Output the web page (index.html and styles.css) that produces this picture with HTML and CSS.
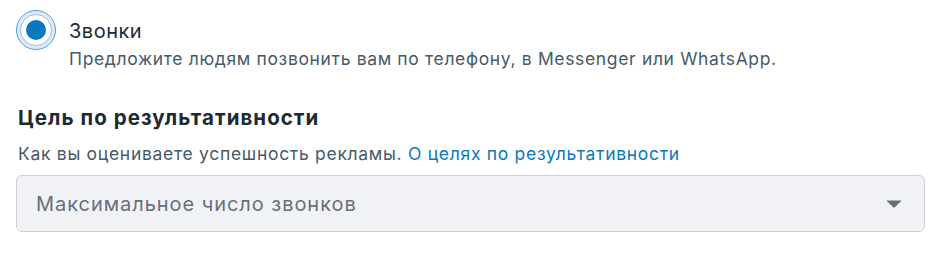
FILE: index.html
```html
<!DOCTYPE html>
<html lang="ru">
<head>
    <meta charset="UTF-8">
    <title>Звонки</title>
    <link rel="stylesheet" href="styles.css">
</head>
<body>
    <div class="option">
        <div class="radio">
            <svg width="40" height="40" viewBox="0 0 40 40">
                <circle cx="20" cy="20" r="19.5" fill="#dde9f6" stroke="#5b9ddc" stroke-width="1"/>
                <circle cx="20" cy="20" r="15.5" fill="#ffffff" stroke="#9dbfe2" stroke-width="1"/>
                <circle cx="20" cy="20" r="10" fill="#0a78be"/>
            </svg>
        </div>
        <div class="option-text">
            <div class="option-title">Звонки</div>
            <div class="option-desc">Предложите людям позвонить вам по телефону, в Messenger или WhatsApp.</div>
        </div>
    </div>

    <div class="goal">
        <h2 class="goal-title">Цель по результативности</h2>
        <p class="goal-desc">Как вы оцениваете успешность рекламы. <a href="#" class="link">О целях по результативности</a></p>
        <div class="select">
            <span class="select-value">Максимальное число звонков</span>
            <svg class="caret" width="16" height="8" viewBox="0 0 16 8">
                <path d="M1.2 0.5 H14.8 Q15.8 0.5 15 1.3 L8.8 7.2 Q8 7.9 7.2 7.2 L1 1.3 Q0.2 0.5 1.2 0.5 Z" fill="#67707a"/>
            </svg>
        </div>
    </div>
</body>
</html>
```

FILE: styles.css
```css
*{
    box-sizing: border-box;
    margin: 0;
    padding: 0;
}
body{
    font-family: Inter, "Noto Sans", sans-serif;
    color: #1c2b33;
    background: #ffffff;
    padding: 10px 21px 0 16px;
}
.option{
    display: flex;
    align-items: flex-start;
}
.radio{
    width: 40px;
    height: 40px;
    margin-right: 13px;
}
.radio svg{
    display: block;
}
.option-text{
    padding-top: 9px;
}
.option-title{
    font-size: 20px;
    line-height: 24px;
    letter-spacing: 0.5px;
}
.option-desc{
    margin-top: 5px;
    font-size: 17.5px;
    line-height: 22px;
    letter-spacing: 0.65px;
    color: #465a69;
}
.goal{
    margin-top: 36px;
}
.goal-title{
    font-size: 20.5px;
    font-weight: 700;
    line-height: 24px;
    letter-spacing: 1.05px;
    padding-left: 2px;
}
.goal-desc{
    margin-top: 13px;
    font-size: 17.5px;
    line-height: 22px;
    letter-spacing: 0.7px;
    color: #465a69;
    padding-left: 2px;
}
.link{
    color: #0a78be;
    text-decoration: none;
}
.select{
    margin-top: 10px;
    height: 57px;
    border: 1px solid #ccd0d5;
    border-radius: 6px;
    background: #f1f2f6;
    display: flex;
    align-items: center;
    justify-content: space-between;
    padding: 0 22px 0 19px;
}
.select-value{
    font-size: 20px;
    letter-spacing: 0.95px;
    color: #67707a;
}
.caret{
    display: block;
}
```
